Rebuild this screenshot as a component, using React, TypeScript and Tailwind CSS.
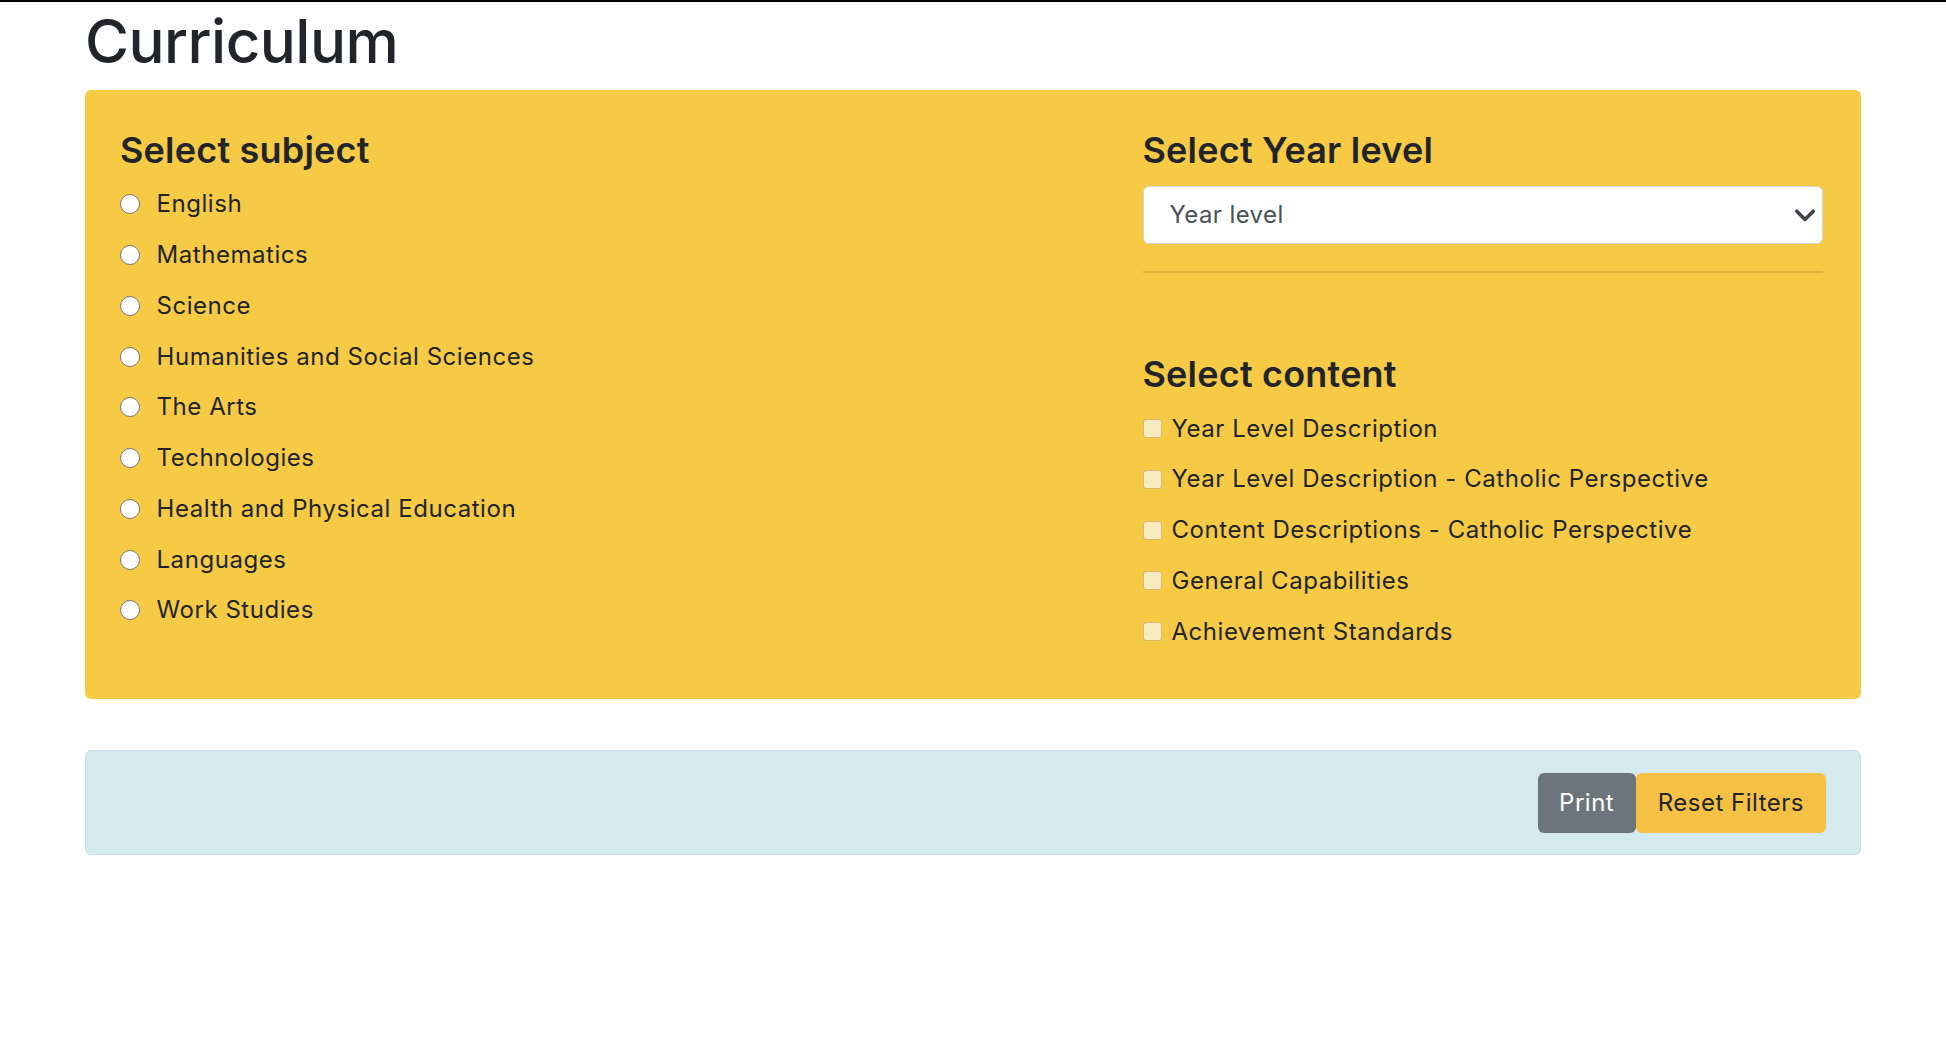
import React from 'react'

const subjects = [
  'English',
  'Mathematics',
  'Science',
  'Humanities and Social Sciences',
  'The Arts',
  'Technologies',
  'Health and Physical Education',
  'Languages',
  'Work Studies',
]

const contents = [
  'Year Level Description',
  'Year Level Description - Catholic Perspective',
  'Content Descriptions - Catholic Perspective',
  'General Capabilities',
  'Achievement Standards',
]

const Radio = ({ label }: { label: string }) => (
  <label className="flex items-center h-[36px] leading-[36px]">
    <span className="w-[20px] h-[20px] rounded-full border-[1.5px] border-[#767676] bg-white shrink-0" />
    <span className="ml-[16.5px]">{label}</span>
  </label>
)

const Check = ({ label }: { label: string }) => (
  <label className="flex items-center h-[36px] leading-[36px]">
    <span className="w-[19px] h-[19px] rounded-[3px] border-[1.5px] border-[#d3ba70] bg-[#f8e9c0] shrink-0" />
    <span className="ml-[10px]">{label}</span>
  </label>
)

const Heading = ({ children }: { children: React.ReactNode }) => (
  <h4 className="text-[36px] leading-[1.2] font-semibold tracking-[0.2px]">{children}</h4>
)

export default function App() {
  return (
    <div className="min-h-screen bg-white text-[#212529] font-['Inter','Noto_Sans',sans-serif]">
      <div className="h-[2px] bg-black" />
      <div className="w-[1776px] mx-auto">
        <h1 className="mt-[1px] mb-[10px] text-[60px] leading-[1.28] font-medium tracking-[-0.5px]">
          Curriculum
        </h1>

        <div className="flex rounded-[6px] bg-[#f7ca46] pt-[39px] pb-[49px] pl-[35px] pr-[36px]">
          <div className="w-[1022.5px] flex flex-col">
            <Heading>Select subject</Heading>
            <div className="mt-[14.5px] flex flex-col gap-[14.75px] text-[24px] tracking-[0.55px]">
              {subjects.map((s) => (
                <Radio key={s} label={s} />
              ))}
            </div>
          </div>

          <div className="w-[680px] flex flex-col">
            <Heading>Select Year level</Heading>
            <div className="mt-[14.5px] h-[58px] flex items-center justify-between rounded-[6px] border-[1.5px] border-[#d3d6d9] bg-white pl-[26px] pr-[5px] text-[24px] tracking-[0.4px] text-[#495057]">
              <span>Year level</span>
              <svg width="24" height="24" viewBox="0 0 16 16" fill="none">
                <path d="M2.5 5.5l5.5 5.5 5.5-5.5" stroke="#3f454b" strokeWidth="2.4" strokeLinecap="round" strokeLinejoin="round" />
              </svg>
            </div>
            <div className="mt-[27px] h-[2px] bg-[#dcb43c]" />

            <div className="mt-[80px]">
              <Heading>Select content</Heading>
            </div>
            <div className="mt-[14px] flex flex-col gap-[14.75px] text-[24px] tracking-[0.55px]">
              {contents.map((c) => (
                <Check key={c} label={c} />
              ))}
            </div>
          </div>
        </div>

        <div className="mt-[51.5px] flex justify-end rounded-[6px] border-[1.5px] border-[#c3e0e7] bg-[#d5eaef] py-[21.5px] pr-[34px]">
          <button className="rounded-[6px] bg-[#6c757d] px-[21.5px] py-[12px] text-[24px] tracking-[0.5px] leading-[36px] text-white">
            Print
          </button>
          <button className="rounded-[6px] bg-[#f5c144] px-[22px] py-[12px] text-[24px] tracking-[0.5px] leading-[36px] text-[#212529]">
            Reset Filters
          </button>
        </div>
      </div>
    </div>
  )
}
